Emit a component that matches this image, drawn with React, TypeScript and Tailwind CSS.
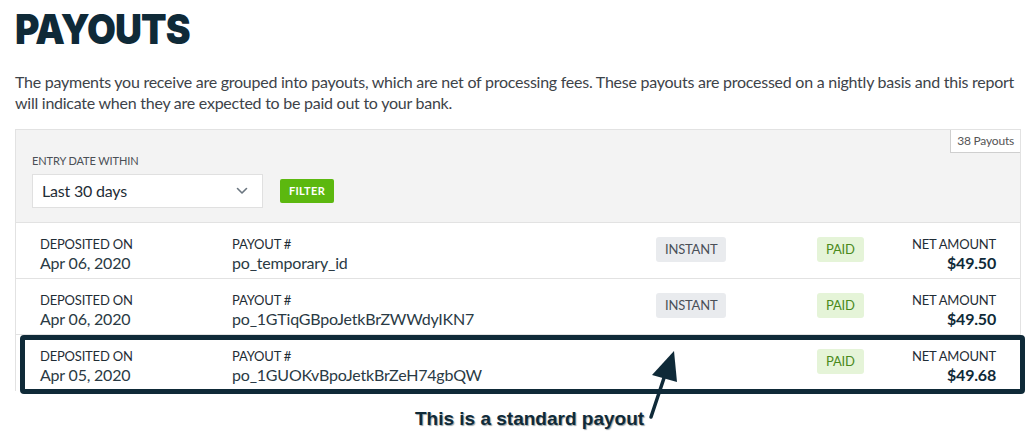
import React from 'react';

type Payout = {
  date: string;
  id: string;
  instant: boolean;
  amount: string;
};

const payouts: Payout[] = [
  { date: 'Apr 06, 2020', id: 'po_temporary_id', instant: true, amount: '$49.50' },
  { date: 'Apr 06, 2020', id: 'po_1GTiqGBpoJetkBrZWWdyIKN7', instant: true, amount: '$49.50' },
  { date: 'Apr 05, 2020', id: 'po_1GUOKvBpoJetkBrZeH74gbQW', instant: false, amount: '$49.68' },
];

const body = { fontFamily: 'Lato, "Open Sans", sans-serif' };

const PayoutRow: React.FC<{ payout: Payout; last: boolean }> = ({ payout, last }) => (
  <div className={`flex items-start h-[56px] pl-6 pr-6 pt-[13px] bg-white tracking-[-0.2px] ${last ? '' : 'border-b border-[#e2e2e2]'}`}>
    <div className="w-[192px] shrink-0">
      <div className="text-[13px] leading-[16px] text-[#1f2d36] uppercase">Deposited On</div>
      <div className="text-[16px] leading-[22px] text-[#2a3a44]">{payout.date}</div>
    </div>
    <div className="w-[424px] shrink-0">
      <div className="text-[13px] leading-[16px] text-[#1f2d36] uppercase">Payout #</div>
      <div className="text-[16px] leading-[22px] text-[#2a3a44]">{payout.id}</div>
    </div>
    <div className="w-[161px] shrink-0">
      {payout.instant && (
        <span className="inline-flex items-center h-[25px] px-[9px] rounded-[3px] bg-[#e9ebee] text-[13px] text-[#4a5058]">
          INSTANT
        </span>
      )}
    </div>
    <div className="flex-1">
      <span className="inline-flex items-center h-[25px] px-[9px] rounded-[3px] bg-[#e5f4d8] text-[13px] text-[#4a8a1c]">
        PAID
      </span>
    </div>
    <div className="text-right">
      <div className="text-[13px] leading-[16px] text-[#1f2d36] uppercase">Net Amount</div>
      <div className="text-[16px] leading-[22px] font-bold text-[#0f2a38]">{payout.amount}</div>
    </div>
  </div>
);

const App: React.FC = () => {
  return (
    <div className="relative w-[1030px] h-[437px] bg-white overflow-hidden" style={body}>
      <div className="pl-[15px] pr-[9px]">
        <h1 className="pt-[8px] h-[50px] text-[41px] leading-[42px] font-black text-[#0f2a38]">
          <span
            className="inline-block origin-left scale-x-[0.91] tracking-[-1px]"
            style={{ fontFamily: 'Inter, sans-serif' }}
          >
            PAYOUTS
          </span>
        </h1>
        <p className="mt-[21px] text-[16px] leading-[21px] tracking-[-0.25px] text-[#3d4349]">
          The payments you receive are grouped into payouts, which are net of processing fees. These payouts are processed on a nightly basis and this report will indicate when they are expected to be paid out to your bank.
        </p>

        <div className="relative mt-[16px] border-l border-r border-t border-[#e2e2e2]">
          <div className="absolute right-0 top-0 h-[23px] px-[6px] flex items-center bg-white border-l border-b border-[#cfcfcf] text-[12px] tracking-[-0.2px] text-[#555]">
            38 Payouts
          </div>
          <div className="bg-[#f3f3f3] h-[93px] pl-[16px] pt-[24px] border-b border-[#e2e2e2]">
            <div className="text-[11px] leading-[14px] tracking-[-0.1px] text-[#4a4f55] uppercase">Entry Date Within</div>
            <div className="flex items-center mt-[6px]">
              <div className="w-[231px] h-[34px] bg-white border border-[#e0e0e0] flex items-center justify-between pl-[9px] pr-[14px]">
                <span className="text-[16px] tracking-[-0.2px] text-[#1f2d36]">Last 30 days</span>
                <svg width="12" height="8" viewBox="0 0 12 8" fill="none">
                  <path d="M1.5 1.5 L6 6 L10.5 1.5" stroke="#6b7680" strokeWidth="1.6" strokeLinecap="round" strokeLinejoin="round" />
                </svg>
              </div>
              <button className="ml-[17px] h-[24px] px-[9px] rounded-[2px] bg-[#5cb80f] text-white text-[11px] font-bold tracking-[0.3px]">
                FILTER
              </button>
            </div>
          </div>
          {payouts.map((p, i) => (
            <PayoutRow key={p.id} payout={p} last={i === payouts.length - 1} />
          ))}
        </div>
      </div>

      {/* highlight box round the standard payout */}
      <div className="absolute left-[20px] top-[335px] w-[1005px] h-[59px] border-[5px] border-[#0f2a38] rounded-[4px]" />

      {/* annotation arrow */}
      <svg className="absolute left-[640px] top-[345px]" width="50" height="80" viewBox="0 0 50 80">
        <path d="M11 72 L25 30" stroke="#0f2a38" strokeWidth="3.5" strokeLinecap="round" />
        <path d="M34 6 L12 30 L37 37 Z" fill="#0f2a38" />
      </svg>

      <div
        className="absolute left-[415px] top-[407px] text-[19px] leading-[24px] font-bold text-[#0f2a38]"
        style={{ fontFamily: '"Liberation Sans", Arial, sans-serif', textShadow: '1px 1px 1px #9aa3a8' }}
      >
        This is a standard payout
      </div>
    </div>
  );
};

export default App;
